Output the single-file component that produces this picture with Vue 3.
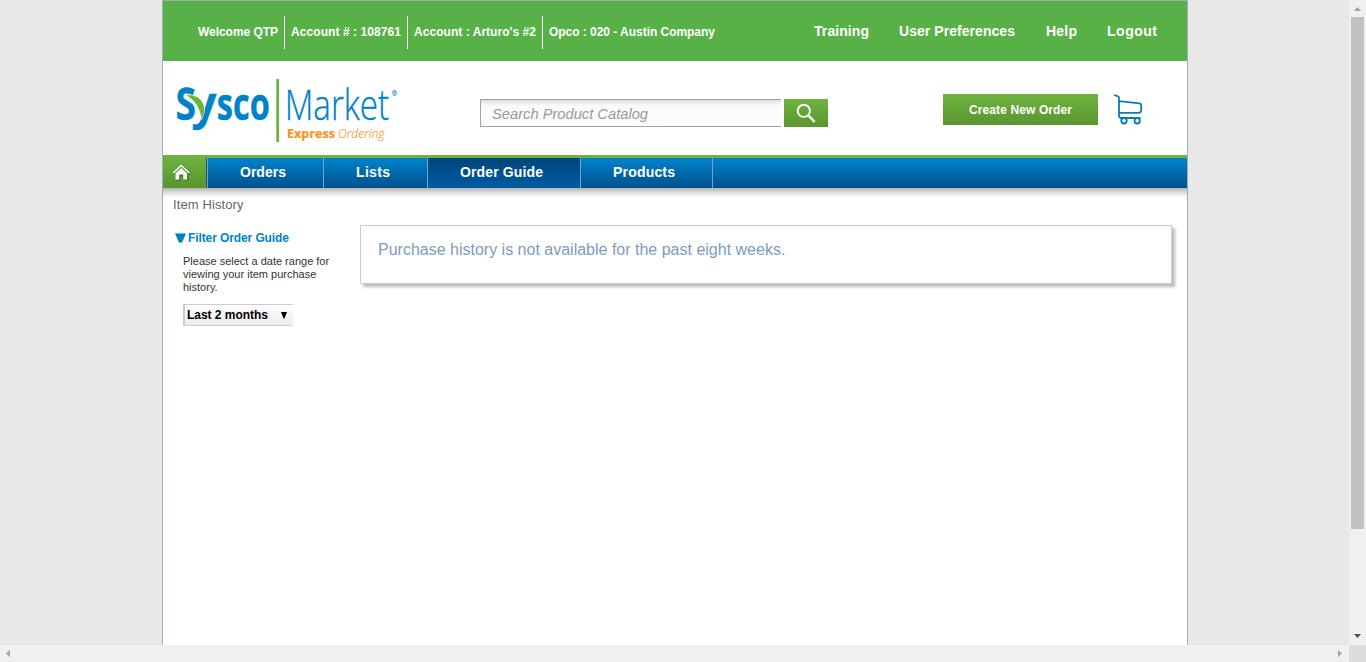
<script setup>
const account = ['Welcome QTP', 'Account # : 108761', "Account : Arturo's #2", 'Opco : 020 - Austin Company']
const accountWidths = [80, 110, 122, 166]
const links = [
  { label: 'Training', width: 55 },
  { label: 'User Preferences', width: 116 },
  { label: 'Help', width: 31 },
  { label: 'Logout', width: 50 },
]
const tabs = [
  { label: 'Orders', width: 116, text: 46 },
  { label: 'Lists', width: 104, text: 34 },
  { label: 'Order Guide', width: 153, text: 83, active: true },
  { label: 'Products', width: 132, text: 62 },
]
</script>

<template>
  <div class="window">
    <div class="viewport">
      <div class="page">
        <header class="topbar">
          <div class="account">
            <div v-for="(item, i) in account" :key="item" class="account-item">
              <svg :width="accountWidths[i]" height="16"><text x="0" y="12" :textLength="accountWidths[i]">{{ item }}</text></svg>
            </div>
          </div>
          <nav class="links">
            <a v-for="link in links" :key="link.label">
              <svg :width="link.width" height="20"><text x="0" y="15" :textLength="link.width">{{ link.label }}</text></svg>
            </a>
          </nav>
        </header>

        <div class="brandbar">
          <svg class="logo" width="245" height="80" viewBox="0 0 245 80">
            <clipPath id="stem"><path d="M43 18H58V70H24V53L37 49Z" /></clipPath>
            <g class="sysco">
              <text x="10.4" y="49.5" textLength="20.5" lengthAdjust="spacingAndGlyphs">S</text>
              <text x="26.5" y="49" textLength="25" lengthAdjust="spacingAndGlyphs" clip-path="url(#stem)">y</text>
              <text x="51.8" y="49.5" textLength="53" lengthAdjust="spacingAndGlyphs">sco</text>
            </g>
            <path d="M20.5 25.2C31 23 41 31 39.5 42L36.5 49.5C35 38 29 29 20.5 25.2Z" fill="#6cb33f" stroke="#fff" stroke-width=".5" />
            <rect x="111.3" y="9" width="2.8" height="63" fill="#6cb33f" />
            <text class="market" x="119.7" y="50" textLength="104.5" lengthAdjust="spacingAndGlyphs">Market</text>
            <text class="registered" x="226.5" y="26">®</text>
            <text class="express" x="122" y="67.5" textLength="48" lengthAdjust="spacingAndGlyphs">Express</text>
            <text class="ordering" x="173" y="67.5" textLength="46.5" lengthAdjust="spacingAndGlyphs">Ordering</text>
          </svg>
          <div class="search">
            <div class="search-field">
              <svg width="160" height="26"><text x="0" y="19" textLength="156" lengthAdjust="spacingAndGlyphs">Search Product Catalog</text></svg>
            </div>
            <button class="search-button">
              <svg width="44" height="28" fill="none" stroke="#fff">
                <circle cx="19.8" cy="11.8" r="6.1" stroke-width="1.9" />
                <path d="M24 16L30.6 22.8" stroke-width="2.5" />
              </svg>
            </button>
          </div>
          <button class="create">
            <svg width="103" height="16"><text x="0" y="12" textLength="103">Create New Order</text></svg>
          </button>
          <svg class="cart" width="32" height="34" fill="none" stroke="#0879b9" stroke-width="1.8">
            <path d="M1 2L4.5 3.1Q6 3.5 6 5V22.5Q6 25 8.5 25H27.5M6 8.2L26.5 10.4Q28.2 10.6 28.2 12V17.3Q28.2 19.8 25.5 19.8H6" />
            <circle cx="11" cy="27.8" r="2.7" />
            <circle cx="24.2" cy="27.8" r="2.7" />
          </svg>
        </div>

        <nav class="menu">
          <a class="home">
            <svg width="43" height="30">
              <g class="home-icon" fill="none" stroke="#fff">
                <path d="M10.2 15L18.2 7.5L26.3 15" stroke-width="1.6" />
                <path d="M12.5 15.3L18.2 9.9L24 15.3V21.5H20.3V16.5H16.2V21.5H12.5Z" fill="#fff" stroke="none" />
              </g>
            </svg>
          </a>
          <a v-for="tab in tabs" :key="tab.label" class="tab" :class="{ active: tab.active }" :style="{ width: tab.width + 'px' }">
            <svg :width="tab.text" height="20"><text x="0" y="15" :textLength="tab.text">{{ tab.label }}</text></svg>
          </a>
          <span class="rest"></span>
        </nav>
        <div class="menu-shadow"></div>

        <div class="breadcrumb">
          <svg width="74" height="15"><text x="0" y="11" textLength="70.5">Item History</text></svg>
        </div>
        <main class="content">
          <aside class="filter">
            <div class="filter-title">
              <svg width="11" height="10"><path d="M0 .5H11L7 9.5H4Z" fill="#0080c8" /></svg>
              <svg width="101" height="16"><text x="0" y="12" textLength="101">Filter Order Guide</text></svg>
            </div>
            <p>Please select a date range for<br>viewing your item purchase<br>history.</p>
            <div class="select">
              <svg width="81" height="16"><text x="0" y="12" textLength="81">Last 2 months</text></svg>
              <svg width="6" height="7"><path d="M0 0H6L3.5 6.5H2.5Z" /></svg>
            </div>
          </aside>
          <section class="notice">Purchase history is not available for the past eight weeks.</section>
        </main>
      </div>
    </div>
    <div class="vscroll">
      <svg width="17" height="17"><path d="M5 11H12L8.5 7Z" fill="#a3a3a3" /></svg>
      <div class="thumb"></div>
      <svg width="17" height="17"><path d="M5 6H12L8.5 10Z" fill="#505050" /></svg>
    </div>
    <div class="hscroll">
      <svg width="17" height="17"><path d="M10 5V12L6 8.5Z" fill="#a3a3a3" /></svg>
      <svg width="17" height="17"><path d="M6 5V12L10 8.5Z" fill="#a3a3a3" /></svg>
    </div>
    <div class="corner"></div>
  </div>
</template>

<style>
body { margin: 0; overflow: hidden; }
</style>

<style scoped>
* { box-sizing: border-box; }
svg { display: block; flex: none; overflow: visible; }
button { border: 0; padding: 0; }
.window {
  width: 1366px;
  height: 662px;
  display: grid;
  grid-template: 645px 17px / 1349px 17px;
  font-family: "Liberation Sans", Arial, sans-serif;
}
.viewport { background: #e8e8e8; overflow: hidden; padding-left: 162px; }
.page {
  width: 1026px;
  height: 645px;
  background: #fff;
  border: solid #9daeb6;
  border-width: 1px 1px 0;
}
.topbar {
  height: 60px;
  background: #58b147;
  display: flex;
  justify-content: space-between;
  font-weight: bold;
}
.topbar text { fill: #fff; }
.account { display: flex; padding: 15px 0 0 29px; font-size: 12px; }
.account-item { height: 33px; padding: 8px 6px 0; }
.account-item + .account-item { border-left: 1px solid #fff; }
.links { display: flex; gap: 30.5px; padding: 20px 30px 0 0; font-size: 14px; }
.brandbar { height: 94px; display: flex; align-items: flex-start; padding-left: 2px; }
.logo { margin-top: 9px; font-family: "Open Sans", "Noto Sans", sans-serif; }
.sysco { font-size: 44px; font-weight: 700; fill: #0082c8; stroke: #0082c8; stroke-width: .4; }
.market { font-size: 43px; font-weight: 300; fill: #0082c8; stroke: #0082c8; stroke-width: .35; }
.registered { font-size: 7px; font-weight: 700; fill: #0082c8; }
.express { font-size: 13px; font-weight: 700; fill: #f7941e; stroke: #f7941e; stroke-width: .2; }
.ordering { font-size: 13px; font-weight: 300; font-style: italic; fill: #f7941e; stroke: #f7941e; stroke-width: .15; }
.search { display: flex; gap: 3px; margin: 38px 0 0 70px; }
.search-field {
  width: 301px;
  height: 28px;
  border: 1px solid #a2a2a2;
  border-right: 0;
  background: linear-gradient(#dedede, #f8f8f8 5px, #fbfbfb 8px);
  padding-left: 11px;
  font-size: 15px;
  font-style: italic;
}
.search-field text { fill: #999; }
.search-button, .create { background: linear-gradient(#6fb43f, #5b9431); }
.search-button { width: 44px; height: 28px; }
.create {
  width: 155px;
  height: 31px;
  margin: 33px 0 0 115px;
  display: flex;
  align-items: center;
  justify-content: center;
  font: bold 12px "Liberation Sans", Arial, sans-serif;
}
.create text { fill: #fff; }
.cart { margin: 32px 0 0 15px; }
.menu {
  height: 33px;
  display: flex;
  border-top: 3px solid #6cb33f;
  background: linear-gradient(#0083cb, #00508d);
  font-size: 14px;
  font-weight: bold;
}
.home { width: 44px; background: linear-gradient(#6cb140, #5b9431); border-right: 1px solid #14586c; }
.home-icon { filter: drop-shadow(1px 1px 1px rgba(0, 0, 0, .35)); }
.tab { height: 30px; border-left: 1px solid #6ba5d3; display: flex; padding: 4px 0 0 32px; }
.tab text { fill: #fff; }
.active { background: linear-gradient(#00447b, #005ca2); }
.rest { width: 1px; height: 30px; background: #6ba5d3; }
.menu-shadow { height: 10px; background: linear-gradient(#b4b4b4, #e2e2e2 5px, #fff); }
.breadcrumb { height: 13px; padding: 0 10px; font-size: 13px; }
.breadcrumb text { fill: #666; }
.content { display: flex; margin-top: 14px; }
.filter { width: 197px; padding: 5px 0 0 12px; }
.filter-title { display: flex; gap: 2px; align-items: center; font-size: 12px; font-weight: bold; }
.filter-title text { fill: #0083ca; }
.filter p { margin: 9px 0 10px 8px; font-size: 11px; line-height: 13px; color: #333; white-space: nowrap; }
.select {
  width: 110px;
  height: 22px;
  margin-left: 8px;
  padding: 0 6px 0 2px;
  border: solid #ccc;
  border-width: 1px 0 1px 2px;
  background: linear-gradient(#fff, #ececec);
  display: flex;
  align-items: center;
  justify-content: space-between;
  font-size: 12px;
  font-weight: bold;
}
.notice {
  width: 812px;
  height: 59px;
  border: 1px solid #ccc;
  box-shadow: 3px 3px 3px #bbb;
  padding: 14px 17px;
  font-size: 16px;
  line-height: 20px;
  color: #7c9bc0;
}
.vscroll { background: #f0f0f0; display: flex; flex-direction: column; }
.thumb { width: 13px; height: 512px; margin: 0 0 auto 2px; background: #c1c1c1; }
.hscroll { background: #f0f0f0; display: flex; justify-content: space-between; }
.corner { background: #dcdcdc; }
</style>
